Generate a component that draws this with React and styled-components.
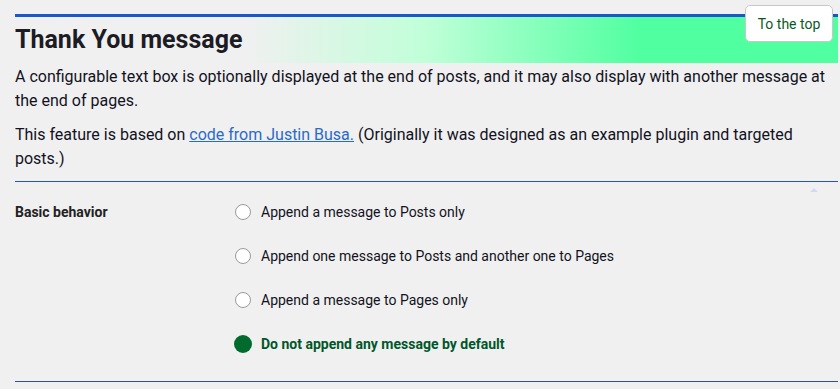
import React from "react";
import styled, { createGlobalStyle } from "styled-components";

const options = [
  { id: "posts", label: "Append a message to Posts only" },
  { id: "both", label: "Append one message to Posts and another one to Pages" },
  { id: "pages", label: "Append a message to Pages only" },
  { id: "none", label: "Do not append any message by default" },
];

export default function App() {
  const selected = "none";
  return (
    <>
      <GlobalStyle />
      <Page>
        <Heading>Thank You message</Heading>
        <Text>
          A configurable text box is optionally displayed at the end of posts, and it may also display
          with another message at the end of pages.
        </Text>
        <Text>
          This feature is based on <Link href="#">code from Justin Busa.</Link> (Originally it was
          designed as an example plugin and targeted posts.)
        </Text>
        <SettingRow>
          <RowLabel>Basic behavior</RowLabel>
          <OptionList>
            {options.map((o) => (
              <Option key={o.id} $checked={o.id === selected}>
                <Radio $checked={o.id === selected} />
                <span>{o.label}</span>
              </Option>
            ))}
          </OptionList>
          <ScrollHint />
        </SettingRow>
      </Page>
      <TopButton>To the top</TopButton>
    </>
  );
}

const GlobalStyle = createGlobalStyle`
  html, body {
    margin: 0;
    background: #f0f0f0;
    font-family: Roboto, "Liberation Sans", sans-serif;
    color: #121222;
  }
`;

const Page = styled.div`
  padding: 14px 2px 0 15px;
`;

const Heading = styled.h2`
  margin: 0;
  border-top: 3px solid #1a56cc;
  padding: 8px 0 9px;
  font-size: 25px;
  line-height: 29px;
  font-weight: 700;
  color: #1c1c24;
  background: linear-gradient(to right, #f0f0f0 28%, #c0ffd8 50%, #50ffa0 76%);
`;

const Text = styled.p`
  margin: 2px 0 10px;
  font-size: 16px;
  line-height: 24px;

  & + & {
    margin-top: 0;
  }
`;

const Link = styled.a`
  color: #2a6ac8;
  text-decoration: underline;
`;

const SettingRow = styled.div`
  position: relative;
  display: flex;
  border-top: 1px solid #2456b8;
  border-bottom: 1px solid #34508a;
`;

const RowLabel = styled.div`
  width: 220px;
  padding-top: 21px;
  font-size: 14px;
  font-weight: 700;
  line-height: 18px;
  color: #222;
`;

const OptionList = styled.div`
  display: flex;
  flex-direction: column;
  gap: 20px;
  padding: 18px 0 25px;
`;

const Option = styled.label`
  display: flex;
  align-items: center;
  gap: 10px;
  height: 24px;
  font-size: 14px;
  font-weight: ${(p) => (p.$checked ? 700 : 400)};
  color: ${(p) => (p.$checked ? "#00562a" : "#121222")};
`;

const Radio = styled.span`
  box-sizing: border-box;
  width: ${(p) => (p.$checked ? "18px" : "16px")};
  height: ${(p) => (p.$checked ? "18px" : "16px")};
  margin-left: ${(p) => (p.$checked ? "-1px" : "0")};
  margin-right: ${(p) => (p.$checked ? "-1px" : "0")};
  border-radius: 50%;
  border: ${(p) => (p.$checked ? "none" : "1px solid #9a9a9a")};
  background: ${(p) => (p.$checked ? "#006b2d" : "#fff")};
`;

const ScrollHint = styled.span`
  position: absolute;
  top: 6px;
  right: 20px;
  width: 0;
  height: 0;
  border-left: 4px solid transparent;
  border-right: 4px solid transparent;
  border-bottom: 4px solid #d4daf4;
`;

const TopButton = styled.button`
  position: fixed;
  top: 5px;
  right: 7px;
  width: 88px;
  height: 37px;
  background: #fff;
  border: 1px solid #c8c8c8;
  border-radius: 5px;
  font-family: Roboto, "Liberation Sans", sans-serif;
  font-size: 14px;
  color: #0a5a1e;
  cursor: pointer;
`;
